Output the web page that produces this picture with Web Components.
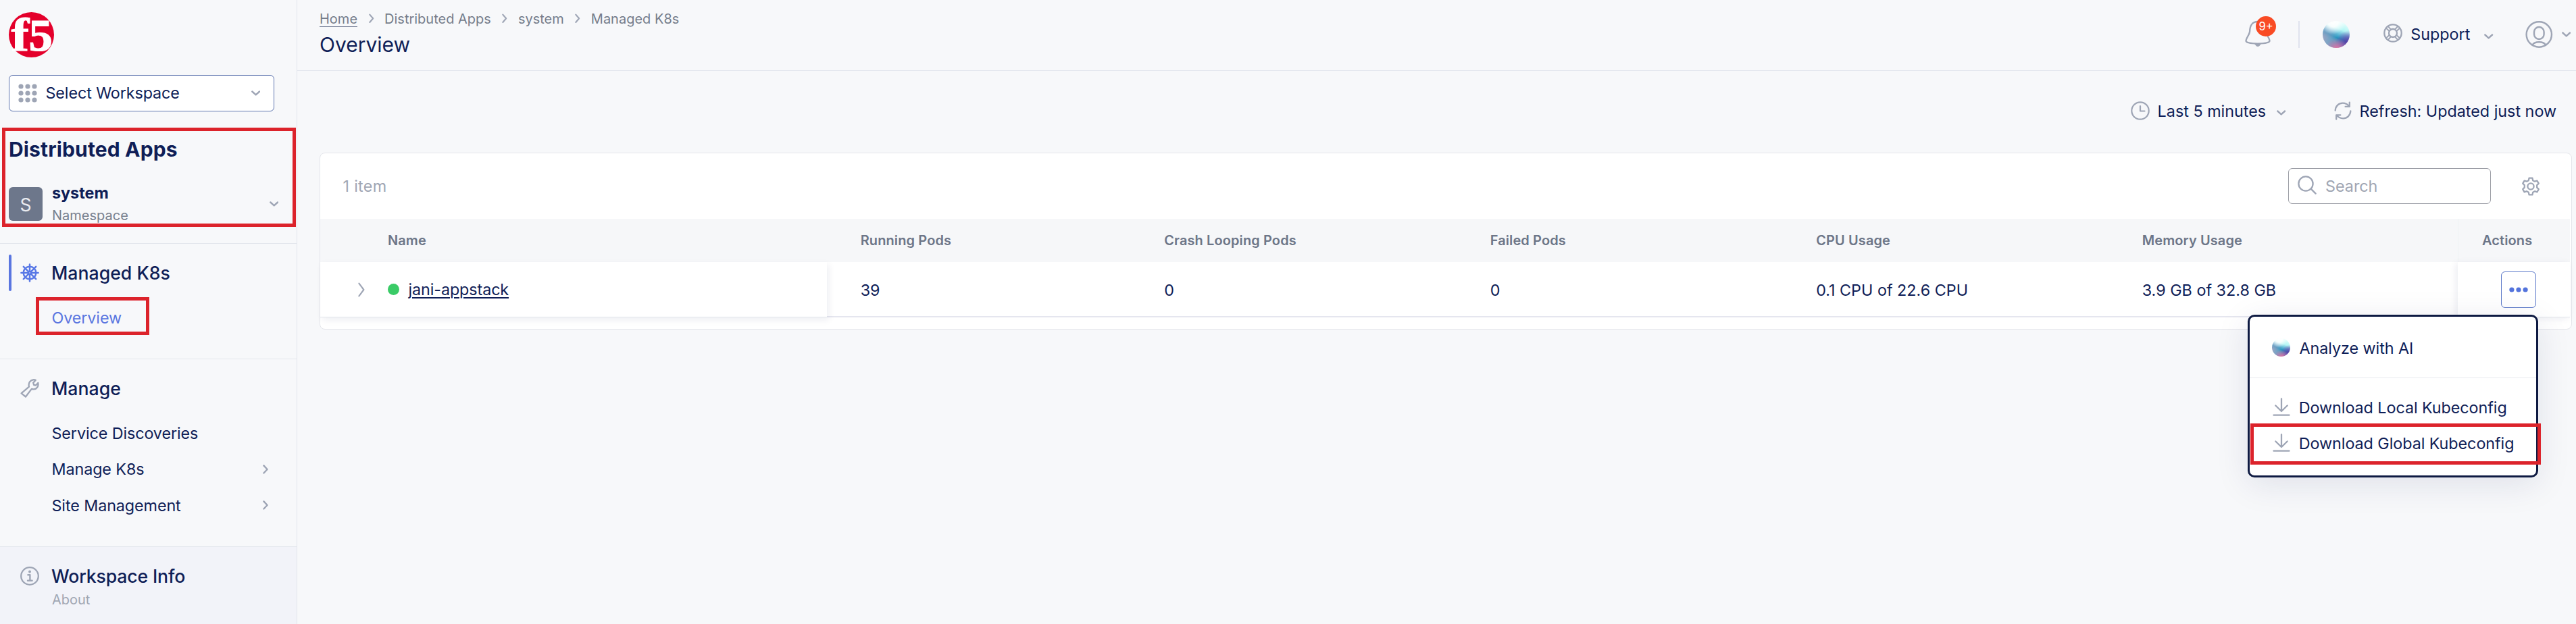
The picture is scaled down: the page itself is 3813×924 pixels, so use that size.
<!DOCTYPE html>
<html lang="en">
<head>
<meta charset="utf-8">
<title>Managed K8s - Overview</title>
<style>
html,body{margin:0;height:100%;overflow:hidden}
body{background:#f7f8fa;font-family:Inter,"Liberation Sans",sans-serif;color:#0f1e57;font-size:23.33px}
</style>
</head>
<body>
<console-app></console-app>
<script>
const define=(name,html)=>customElements.define(name,class extends HTMLElement{
  constructor(){super();
    const t=document.createElement('template');t.innerHTML=html;
    this.attachShadow({mode:'open'}).append(t.content.cloneNode(true));}
});

/* Line icons, all drawn in #9ea5b5 unless the host sets another colour */
const line='fill="none" stroke="currentColor" stroke-linecap="round" stroke-linejoin="round"';
const ICONS={
 down:[13.4,8,`<path ${line} stroke-width="2.4" d="M1.3 1.5 6.7 6.4l5.4-4.9"/>`],
 right:[8,14,`<path ${line} stroke-width="2.4" d="M1.4 1.4 6.6 7l-5.2 5.5"/>`],
 crumb:[9,17,`<path ${line} stroke-width="2.1" d="M2.300 2.600 7.2 8.3 2.300 14"/>`],
 expand:[10,22,`<path ${line} stroke-width="2.1" d="M1.4 1.6 8.4 11 1.4 20.4"/>`],
 grid:[28,28,[4,14,24].map(y=>[4,14,24].map(x=>`<circle cx="${x}" cy="${y}" r="3.6" fill="currentColor"/>`).join('')).join('')],
 helm:[28,28,`<g ${line} stroke-width="2.5"><circle cx="14" cy="14" r="9.300"/><circle cx="14" cy="14" r="2"/><path d="M14 1.4v9.8M14 16.800v9.800M1.400 14h9.800M16.800 14h9.800M4.800 4.800l7 7M16.200 16.200l7 7M23.200 4.800l-7 7M11.800 16.200l-7 7"/></g>`],
 wrench:[28,28,`<path ${line} stroke-width="2.3" d="M1.600 21.400 13 11.600C11.600 6.400 14.600 1.900 19.200 1.300c1.200-.1 2.500.1 3.500.6l-3.500 3.900.9 3.200 3 .6 3.200-3.700c1.200 5.200-2 9.200-6.200 9.500-1.400.1-2.500-.2-3.300-.5L8 26.500z"/>`],
 info:[28,28,`<circle cx="14" cy="14" r="12.800" fill="none" stroke="currentColor" stroke-width="2.300"/><circle cx="14" cy="7.600" r="2" fill="currentColor"/><path ${line} stroke-width="2.400" d="M11.400 12.300h3v8.400M11 20.700h6.600"/>`],
 bell:[38,40,`<path ${line} stroke-width="2.300" d="M19 2C10.500 2 7.400 8.600 7.200 15.600 7.100 21.500 1.500 26 1.500 30.600c0 2.700 8.500 4 17.500 4s17.500-1.300 17.500-4c0-4.600-5.600-9.100-5.700-15C30.600 8.600 27.500 2 19 2z"/><path d="M13.500 34.800h11c-1 .6-1.500 1-2.200 2.200C21.500 38.300 20.400 39 19 39s-2.500-.7-3.300-2c-.7-1.200-1.200-1.600-2.200-2.200z" fill="currentColor"/>`],
 buoy:[28,28,`<g ${line} stroke-width="2.300"><circle cx="14" cy="14" r="12.700"/><circle cx="14" cy="14" r="6"/><path d="M4 6.800l4.900 4.400M6.800 4l4.400 4.900M24 6.800l-4.900 4.400M21.200 4l-4.400 4.900M4 21.200l4.900-4.400M6.800 24l4.400-4.900M24 21.200l-4.900-4.400M21.200 24l-4.400-4.900" stroke-width="1.900"/></g>`],
 user:[41,40,`<g ${line} stroke-width="2.400"><circle cx="20.300" cy="20" r="18.700"/><rect x="13" y="9" width="14.600" height="18" rx="7.300"/><path d="M10.500 35.500c1.500-2.800 4.500-4.300 9.800-4.300s8.300 1.500 9.800 4.300"/></g>`],
 clock:[28,28,`<g ${line} stroke-width="2.200"><circle cx="14" cy="14" r="12.700"/><path d="M14 7v7.500h6.500"/></g>`],
 refresh:[26,28,`<g ${line} stroke-width="2.300"><path d="M1.700 13.500C2.100 7 6.800 2.700 12.800 2.700c3.400 0 6.400 1.200 8.800 4.200M22.800 1.600v6.300h-6.200M24.300 14.500c-.4 6.500-5.100 10.800-11.100 10.800-3.400 0-6.400-1.200-8.800-4.200M3.200 26.600v-6.300h6.200"/></g>`],
 search:[28,28,`<g ${line} stroke-width="2.300"><circle cx="12" cy="12" r="10.600"/><path d="M19.600 19.600l7 7"/></g>`],
 gear:[28,28,`<g ${line} stroke-width="2.300"><circle cx="14" cy="14" r="4.600"/><path d="M11.600 1.600h4.800l.8 3.600 2.700 1.500 3.500-1.100 2.400 4.100-2.600 2.500v3.500l2.600 2.500-2.400 4.100-3.500-1.100-2.700 1.500-.8 3.700h-4.800l-.8-3.700-2.700-1.500-3.500 1.100-2.400-4.100 2.600-2.500v-3.500L2.200 9.700l2.400-4.100 3.500 1.100 2.700-1.500z"/></g>`],
 dots:[28,8,`<g fill="currentColor"><circle cx="3.900" cy="4" r="3.600"/><circle cx="14" cy="4" r="3.600"/><circle cx="24.100" cy="4" r="3.600"/></g>`],
 download:[26,28,`<g ${line} stroke-width="2.300"><path d="M13 1.300v17.700M4.300 11.500 13 20l8.700-8.500M1.500 25.700h23"/></g>`]
};
customElements.define('line-icon',class extends HTMLElement{
  constructor(){super();this.attachShadow({mode:'open'});}
  connectedCallback(){
    const [w,h,body]=ICONS[this.getAttribute('name')];
    this.shadowRoot.innerHTML=`<style>:host{display:block;flex:none;color:#9ea5b5;width:${w}px;height:${h}px}svg{display:block}</style>
    <svg width="${w}" height="${h}" viewBox="0 0 ${w} ${h}">${body}</svg>`;
  }
});

define('ai-orb',`<style>
:host{display:block;flex:none;width:40px;height:40px;border-radius:50%;
background:
radial-gradient(circle at 52% 104%,rgba(240,110,160,.95) 0,rgba(225,110,165,.55) 18%,rgba(200,110,170,0) 36%),
radial-gradient(circle at 96% 84%,rgba(95,45,160,.95) 0,rgba(95,60,170,.6) 20%,rgba(90,80,180,0) 38%),
radial-gradient(circle at 38% 0,#fff 0,rgba(255,255,255,.9) 18%,rgba(255,255,255,0) 42%),
radial-gradient(circle at 0 62%,rgba(165,165,195,.9) 0,rgba(150,165,200,.5) 28%,rgba(120,165,200,0) 48%),
linear-gradient(203deg,#e8fffd 8%,#b4f6f4 32%,#6cc0da 45%,#1f93bd 58%,#3d9fc2 68%,#6fa9c6 100%)}
</style>`);

define('mark-box',`<style>:host{position:absolute;box-sizing:border-box;border:5px solid #dc232b;z-index:5}</style>`);

define('brand-logo',`<style>:host{display:block;width:67px;height:67px}svg{display:block;overflow:visible}
text{font-family:"Liberation Serif",serif;font-weight:700;fill:#fff;stroke:#fff}</style>
<svg width="67" height="67" viewBox="0 0 67 67">
<circle cx="33.500" cy="33.500" r="33.500" fill="#e4002b"/>
<text transform="translate(3.500 57.300) scale(1.16 1)" font-size="69" stroke-width="1">f</text>
<text transform="translate(29.500 57) scale(1.040 1)" font-size="68" stroke-width="1.200">5</text></svg>`);

define('nav-head',`<style>
:host{display:flex;align-items:center;height:54px;box-sizing:border-box;padding-left:13px;font-size:26.67px;font-weight:500}
i{display:block;width:4px;height:54px;border-radius:2px;margin-right:13px}
:host([active]) i{background:#5a76e0}:host([active]) ::slotted(line-icon){color:#5878e6}
span{margin-left:18px}</style><i></i><slot name="icon"></slot><span><slot></slot></span>`);

define('nav-link',`<style>
:host{display:flex;align-items:center;justify-content:space-between;height:53.300px;padding:0 42px 0 76.500px;letter-spacing:-.1px}
:host([active]){color:#5a76e0}</style><slot></slot><slot name="end"></slot>`);

define('side-bar',`<style>
:host{display:flex;flex-direction:column;width:440px;height:924px;flex:none;box-sizing:border-box;border-right:1px solid #e3e6ec;position:relative}
brand-logo{margin:18px 0 26px 13px}
.ws{display:flex;align-items:center;box-sizing:border-box;width:393px;height:54px;margin-left:13px;border:1px solid #5c73ae;border-radius:6px;background:#fff;padding:0 20px 0 13px}
.ws span{flex:1;margin-left:12.500px;padding-bottom:1px;letter-spacing:-.1px}
h1{margin:26px 0 0 13px;height:60px;line-height:60px;font-size:30px;font-weight:700;letter-spacing:.15px}
.ns{display:flex;align-items:center;height:62px;margin:20px 0 27px 13px}
.av{width:50px;height:50px;border-radius:6px;background:#6d778b;color:#e9ebf0;font-size:26.670px;line-height:52px;text-align:center}
.tx{flex:1;margin-left:14px}
b{display:block;line-height:28px}
small{display:block;font-size:20px;line-height:26px;margin-top:6px;color:#78808e}
.ns line-icon{margin-right:27px}
section{box-sizing:border-box;border-top:1px solid #e3e6ec;padding-top:16px}
.a{height:171px}.b{height:278px}.c{flex:1;background:#f2f3f9}
.c nav-head{letter-spacing:-.15px}
nav{margin-top:13px}
.c small{margin:-5px 0 0 77px;color:#a0a6b3}
</style>
<brand-logo></brand-logo>
<div class="ws"><line-icon name="grid"></line-icon><span>Select Workspace</span><line-icon name="down"></line-icon></div>
<h1>Distributed Apps</h1>
<div class="ns"><div class="av">S</div><div class="tx"><b>system</b><small>Namespace</small></div><line-icon name="down"></line-icon></div>
<section class="a"><nav-head active><line-icon slot="icon" name="helm"></line-icon>Managed K8s</nav-head><nav><nav-link active>Overview</nav-link></nav></section>
<section class="b"><nav-head><line-icon slot="icon" name="wrench"></line-icon>Manage</nav-head><nav><nav-link>Service Discoveries</nav-link><nav-link>Manage K8s<line-icon slot="end" name="right"></line-icon></nav-link><nav-link>Site Management<line-icon slot="end" name="right"></line-icon></nav-link></nav></section>
<section class="c"><nav-head><line-icon slot="icon" name="info"></line-icon>Workspace Info</nav-head><small>About</small></section>
<mark-box style="left:3px;top:189px;width:435px;height:147px"></mark-box>
<mark-box style="left:53px;top:440px;width:168px;height:56px"></mark-box>`);

define('top-bar',`<style>
:host{display:flex;justify-content:space-between;height:105px;box-sizing:border-box;border-bottom:1px solid #e3e6ee;padding:0 8px 0 33px}
.crumbs{display:flex;align-items:center;font-size:20px;line-height:28px;color:#757d8b;margin-top:13.500px}
.crumbs line-icon{margin:0 15.500px}
.crumbs u{text-decoration:none;border-bottom:1px solid #6f7890;line-height:22px;margin-top:2px}
h2{margin:4.500px 0 0;font-size:30px;line-height:40px;font-weight:400}
.right{display:flex;align-items:flex-start}
.bell{position:relative;margin-top:30px}
.badge{position:absolute;left:16px;top:-6px;width:30px;height:30px;border-radius:50%;background:#f94b24;color:#fff;font-size:16.700px;line-height:30px;text-align:center}
hr{width:2px;height:40px;border:0;margin:31px 34px 0 41px;background:#e0e3ee}
ai-orb{margin:31px 50px 0 0}
.sup{margin:36.700px 0 0 12px;line-height:28px;width:109px}
</style>
<div><div class="crumbs"><u>Home</u><line-icon name="crumb"></line-icon><span>Distributed Apps</span><line-icon name="crumb"></line-icon><span>system</span><line-icon name="crumb"></line-icon><span>Managed K8s</span></div>
<h2>Overview</h2></div>
<div class="right"><div class="bell"><line-icon name="bell"></line-icon><div class="badge">9+</div></div><hr><ai-orb></ai-orb>
<line-icon name="buoy" style="margin-top:35px"></line-icon><span class="sup">Support</span><line-icon name="down" style="margin-top:50px"></line-icon>
<line-icon name="user" style="margin:31px 13px 0 47px"></line-icon><line-icon name="down" style="margin-top:47px"></line-icon></div>`);

define('time-tools',`<style>
:host{display:flex;justify-content:flex-end;align-items:center;height:56px;padding:31px 0 34px;margin-right:26px}
.l{width:176.500px;margin-left:12px}.r{width:294.500px;margin-left:12px}
line-icon[name=down]{margin:6px 71px 0 0}</style>
<line-icon name="clock"></line-icon><span class="l">Last 5 minutes</span><line-icon name="down"></line-icon><line-icon name="refresh"></line-icon><span class="r">Refresh: Updated just now</span>`);

define('action-menu',`<style>
:host{position:absolute;z-index:4;box-sizing:border-box;width:430px;height:241px;border:3px solid #0e1a42;border-radius:10px;background:#fff;box-shadow:0 10px 50px rgba(15,30,87,.1);white-space:nowrap;letter-spacing:-.06px}
div{display:flex;align-items:center;height:53.300px;padding-left:34px}
.ai{height:91px;box-sizing:border-box;border-bottom:1px solid #e9ebef;margin-bottom:16.500px;padding-left:33px}
ai-orb{width:27px;height:27px;margin-right:13.500px}
.ai span{margin-top:2px}
line-icon{margin-right:12.800px}
mark-box{left:1px;top:158px;width:430px;height:61px}
</style>
<div class="ai"><ai-orb></ai-orb><span>Analyze with AI</span></div>
<div><line-icon name="download"></line-icon><span>Download Local Kubeconfig</span></div>
<div><line-icon name="download"></line-icon><span>Download Global Kubeconfig</span></div>
<mark-box></mark-box>`);

define('cluster-card',`<style>
:host{display:flex;flex-direction:column;position:relative;box-sizing:border-box;width:3334px;height:262px;margin-left:33px;border:1px solid #e4e6eb;border-radius:8px;background:#fff}
.bar{display:flex;align-items:center;height:97px;color:#a0a6b3}
.bar>span{flex:1;margin-left:33.500px;letter-spacing:.3px;margin-top:-1px}
.search{display:flex;align-items:center;box-sizing:border-box;width:300px;height:53px;border:1px solid #9c9ea6;border-radius:6px;padding-left:13px}
.search span{margin-left:13px}
.search line-icon{margin-top:-4px}
.bar>line-icon{margin:0 46px 0 45px}
.row{display:grid;grid-template-columns:750px 449.500px 482.500px 482.500px 482.500px 517px 166px;width:3330px;position:relative}
.row>*{display:flex;align-items:center;box-sizing:border-box;padding-left:49.700px}
.h{height:64px;background:#f6f7f9;font-size:20px;font-weight:600;color:#6d7688;z-index:1;letter-spacing:.1px}
.h>:first-child{padding-left:100px}
.h>:last-child{padding-left:35px;border-left:1px solid #f0f2f5}
.v{height:82px}
.v>*{border-bottom:2px solid #e5e6ef;background:#fff;padding-top:2px}
.v>:first-child{padding:0 0 0 55.500px;border-bottom:1px solid #e1e4ea;box-shadow:3px 4px 10px rgba(15,30,87,.07);z-index:1}
.v>:last-child{padding:0 0 0 64px;border-bottom:1px solid #e1e4ea;box-shadow:-3px 2px 10px rgba(15,30,87,.08);z-index:1}
i{width:17px;height:17px;border-radius:50%;background:#3acb67;margin:0 14px 0 34px}
a{text-decoration:underline;text-decoration-thickness:2px;text-underline-offset:3px;letter-spacing:-.1px}
button{all:unset;display:flex;align-items:center;justify-content:center;box-sizing:border-box;width:52px;height:54px;border:1px solid #5876c8;border-radius:6px}
button line-icon{color:#5373dc}
action-menu{left:2853px;top:239px}
</style>
<div class="bar"><span>1 item</span><div class="search"><line-icon name="search"></line-icon><span>Search</span></div><line-icon name="gear"></line-icon></div>
<div class="row h"><div>Name</div><div>Running Pods</div><div>Crash Looping Pods</div><div>Failed Pods</div><div>CPU Usage</div><div>Memory Usage</div><div>Actions</div></div>
<div class="row v"><div><line-icon name="expand"></line-icon><i></i><a>jani-appstack</a></div><div>39</div><div>0</div><div>0</div><div>0.1 CPU of 22.6 CPU</div><div>3.9 GB of 32.8 GB</div><div><button><line-icon name="dots"></line-icon></button></div></div>
<action-menu></action-menu>`);

define('console-app',`<style>:host{display:flex;width:3813px;height:924px}main{flex:1;min-width:0}</style>
<side-bar></side-bar><main><top-bar></top-bar><time-tools></time-tools><cluster-card></cluster-card></main>`);
</script>
</body>
</html>
